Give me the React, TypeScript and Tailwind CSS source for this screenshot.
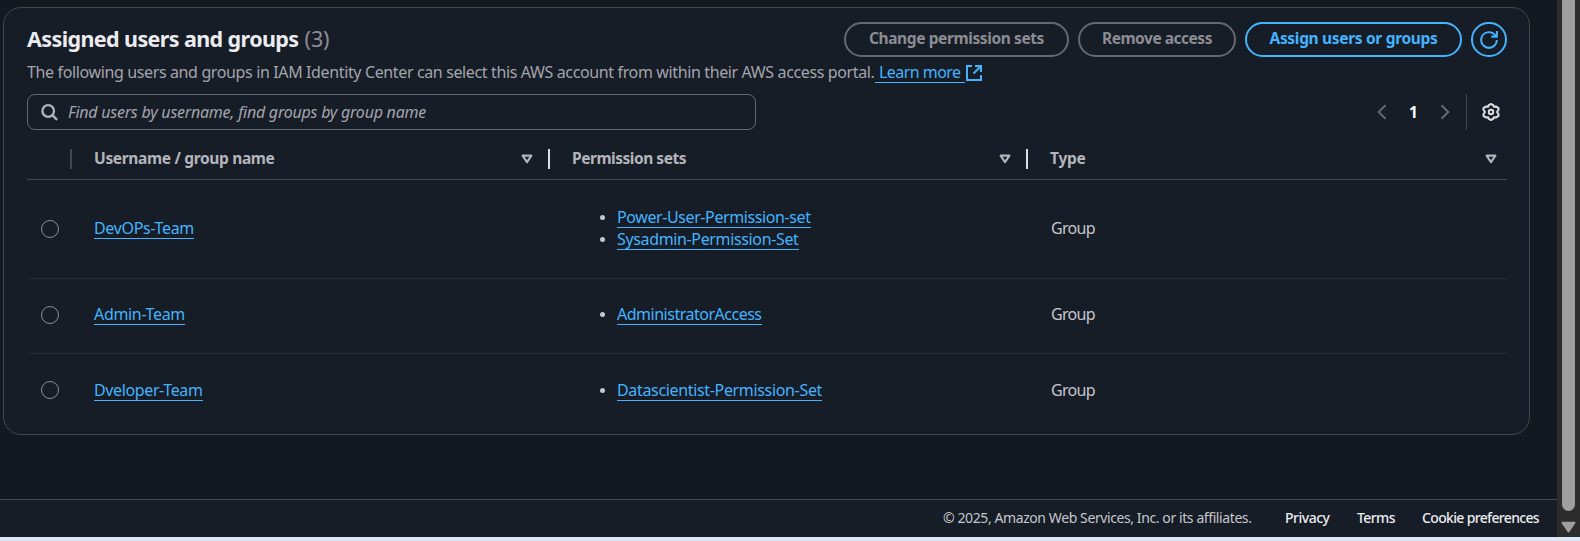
import type { ReactNode } from "react";

const gearPath =
  "M9 1 11.3 2.1 11.8 3.7 13.8 3.5 16.4 4.9 16.6 6.7 15 9 16.6 11.3 16.4 13.1 13.8 14.5 11.8 14.3 11.3 15.9 9 17 6.7 15.9 6.2 14.3 4.2 14.5 1.6 13.1 1.4 11.3 3 9 1.4 6.7 1.6 4.9 4.2 3.5 6.2 3.7 6.7 2.1Z";

function SortIcon() {
  return (
    <svg className="block h-[10px] w-3" viewBox="0 0 12 10" fill="none" stroke="#b4b4bb" strokeWidth="2.1" strokeLinejoin="round">
      <path d="M1.6 1.6h8.8L6 8.2z" />
    </svg>
  );
}

function Link({ children, spacing }: { children: ReactNode; spacing: string }) {
  return (
    <a href="#" className={`block w-fit border-b border-[#42b4ff] text-[16px] leading-5 whitespace-nowrap text-[#42b4ff] ${spacing}`}>
      {children}
    </a>
  );
}

function HeaderCell({ label, spacing, divider }: { label: string; spacing: string; divider: boolean }) {
  return (
    <div className={`flex h-5 items-center ${divider ? "w-[478px]" : "flex-1"}`}>
      <span className={`ml-[22px] flex-1 pb-[2px] text-[15.5px] leading-5 font-bold text-[#b4b4bb] ${spacing}`}>{label}</span>
      <SortIcon />
      {divider ? <span className="ml-[15px] h-5 w-0.5 bg-[#dedee3]" /> : <span className="w-[10px]" />}
    </div>
  );
}

const rows = [
  {
    name: "DevOPs-Team",
    spacing: "tracking-[-0.327px]",
    height: "h-[99px] border-b pb-px",
    radio: "",
    sets: [
      { label: "Power-User-Permission-set", spacing: "tracking-[-0.403px]" },
      { label: "Sysadmin-Permission-Set", spacing: "tracking-[-0.357px]" },
    ],
  },
  {
    name: "Admin-Team",
    spacing: "tracking-[-0.329px]",
    height: "h-[75px] border-b pb-[3px]",
    radio: "",
    sets: [{ label: "AdministratorAccess", spacing: "tracking-[-0.493px]" }],
  },
  {
    name: "Dveloper-Team",
    spacing: "tracking-[-0.374px]",
    height: "h-[73px]",
    radio: "mb-[2px]",
    sets: [{ label: "Datascientist-Permission-Set", spacing: "tracking-[-0.337px]" }],
  },
];

export default function App() {
  return (
    <div className="flex h-[541px] w-[1580px] flex-col overflow-hidden bg-[#dde7f8] font-['Noto_Sans','Open_Sans',sans-serif]">
      <div className="flex h-[537px]">
        <div className="flex w-[1557px] flex-col bg-[#131920]">
          <main className="h-[499px] pt-[7px] pl-[3px]">
            <section className="h-[428px] w-[1527px] rounded-[18px] border border-[#424650] bg-[#161d26] px-[22px] pl-[23px]">
              <div className="flex h-[50px] pt-[14px]">
                <h2 className="flex-1 pt-[2px] text-[21.5px] leading-[30px] font-bold tracking-[-0.606px] whitespace-nowrap text-[#ebebf0]">
                  Assigned users and groups
                  <span className="ml-[6px] font-normal tracking-[-0.07px] text-[#8c8c94]">(3)</span>
                </h2>
                <div className="flex gap-[9px] text-[15.5px] font-bold whitespace-nowrap">
                  <button className="flex h-[35px] w-[225px] items-center justify-center rounded-full border-2 border-[#656871] pb-px tracking-[-0.396px] text-[#8c8c94]">
                    Change permission sets
                  </button>
                  <button className="flex h-[35px] w-[158px] items-center justify-center rounded-full border-2 border-[#656871] pb-px tracking-[-0.472px] text-[#8c8c94]">
                    Remove access
                  </button>
                  <button className="flex h-[35px] w-[217px] items-center justify-center rounded-full border-2 border-[#42b4ff] pb-px tracking-[-0.322px] text-[#42b4ff]">
                    Assign users or groups
                  </button>
                  <button className="flex h-[35px] w-9 items-center justify-center rounded-full border-2 border-[#42b4ff]">
                    <svg className="block size-[18px]" viewBox="0 0 16 16" fill="none" stroke="#42b4ff" strokeWidth="1.8">
                      <path d="M10 5h5V0" />
                      <path d="M15 8a7 7 0 1 1-14 0 7 7 0 0 1 13.3-3" />
                    </svg>
                  </button>
                </div>
              </div>

              <p className="mt-[4px] flex h-5 text-[16px] leading-5 whitespace-nowrap text-[#a4a4ad]">
                <span className="w-[848px] tracking-[-0.369px]">
                  The following users and groups in IAM Identity Center can select this AWS account from within their AWS access portal.
                </span>
                <a href="#" className="flex text-[#42b4ff]">
                  <span className="h-[21px] w-[90px] border-b border-[#42b4ff] pl-1 tracking-[-0.55px]">Learn more</span>
                  <svg className="mt-[3px] ml-px block size-4" viewBox="0 0 16 16" fill="none" stroke="#42b4ff" strokeWidth="2">
                    <path d="M6 1H1v14h14v-5" />
                    <path d="M9 1h6v6" />
                    <path d="M15 1 7.5 8.5" />
                  </svg>
                </a>
              </p>

              <div className="mt-[12px] flex h-9 items-center">
                <div className="flex h-9 w-[729px] items-center rounded-[8px] border border-[#656871] pl-[13px]">
                  <svg className="block size-[17px]" viewBox="0 0 17 17" fill="none" stroke="#b4b4bb" strokeWidth="2.3">
                    <circle cx="7.2" cy="7" r="5.8" />
                    <path d="m11.3 11.1 4.8 4.8" />
                  </svg>
                  <span className="ml-[10px] pb-px text-[16px] leading-5 tracking-[-0.234px] text-[#a4a4ad] italic">
                    Find users by username, find groups by group name
                  </span>
                </div>
                <div className="ml-auto flex h-9 items-center">
                  <svg className="block h-4 w-[10px]" viewBox="0 0 10 16" fill="none" stroke="#656871" strokeWidth="2">
                    <path d="M8.5 1.2 1.7 8l6.8 6.8" />
                  </svg>
                  <span className="w-[53px] pb-px text-center text-[15.5px] leading-5 font-bold text-white">1</span>
                  <svg className="block h-4 w-[10px]" viewBox="0 0 10 16" fill="none" stroke="#656871" strokeWidth="2">
                    <path d="M1.5 1.2 8.3 8l-6.8 6.8" />
                  </svg>
                  <span className="ml-[16px] h-9 w-px bg-[#424650]" />
                  <svg className="mr-[7px] ml-[15px] block size-[18px]" viewBox="0 0 18 18" fill="none" stroke="#dedee3" strokeWidth="2" strokeLinejoin="round">
                    <path d={gearPath} />
                    <circle cx="9" cy="9" r="2.2" />
                  </svg>
                </div>
              </div>

              <div className="flex h-[50px] border-b border-[#424650] pt-[19px]">
                <div className="flex h-5 w-[45px] justify-end">
                  <span className="h-5 w-0.5 bg-[#424650]" />
                </div>
                <HeaderCell label="Username / group name" spacing="tracking-[-0.339px]" divider />
                <HeaderCell label="Permission sets" spacing="tracking-[-0.472px]" divider />
                <HeaderCell label="Type" spacing="tracking-[-0.258px]" divider={false} />
              </div>

              {rows.map((row) => (
                <div key={row.name} className={`flex items-center border-[#232b37] ${row.height}`}>
                  <span className={`ml-[14px] size-[18px] rounded-full border border-[#8c8c94] ${row.radio}`} />
                  <div className="ml-[35px] w-[508px]">
                    <Link spacing={row.spacing}>{row.name}</Link>
                  </div>
                  <ul className="flex w-[449px] flex-col gap-px">
                    {row.sets.map((set) => (
                      <li key={set.label} className="flex items-center">
                        <span className="mr-[12px] ml-[-2px] size-[5px] rounded-full bg-[#c6c6cd]" />
                        <Link spacing={set.spacing}>{set.label}</Link>
                      </li>
                    ))}
                  </ul>
                  <span className="pb-px text-[16px] leading-5 tracking-[-0.669px] text-[#c6c6cd]">Group</span>
                </div>
              ))}
            </section>
          </main>
          <footer className="flex h-[38px] border-t border-[#424650] bg-[#161d26] pt-[8px] pl-[943px] text-[14px] leading-5 font-medium whitespace-nowrap text-[#ebebf0]">
            <span className="w-[342px] font-normal tracking-[-0.406px] text-[#c6c6cd]">© 2025, Amazon Web Services, Inc. or its affiliates.</span>
            <a href="#" className="w-[72px] tracking-[-0.485px]">Privacy</a>
            <a href="#" className="w-[65px] tracking-[-0.582px]">Terms</a>
            <a href="#" className="tracking-[-0.658px]">Cookie preferences</a>
          </footer>
        </div>
        <div className="flex w-[23px] flex-col bg-[#2c2c2c] pl-[5px]">
          <div className="h-[511px] w-[13px] rounded-b-full bg-[#9f9f9f]" />
          <svg className="mt-[10px] -ml-px block h-3 w-[15px]" viewBox="0 0 15 12" fill="#9f9f9f" stroke="#9f9f9f" strokeWidth="2" strokeLinejoin="round">
            <path d="M1.5 1.7h12L7.5 10.5z" />
          </svg>
        </div>
      </div>
    </div>
  );
}
